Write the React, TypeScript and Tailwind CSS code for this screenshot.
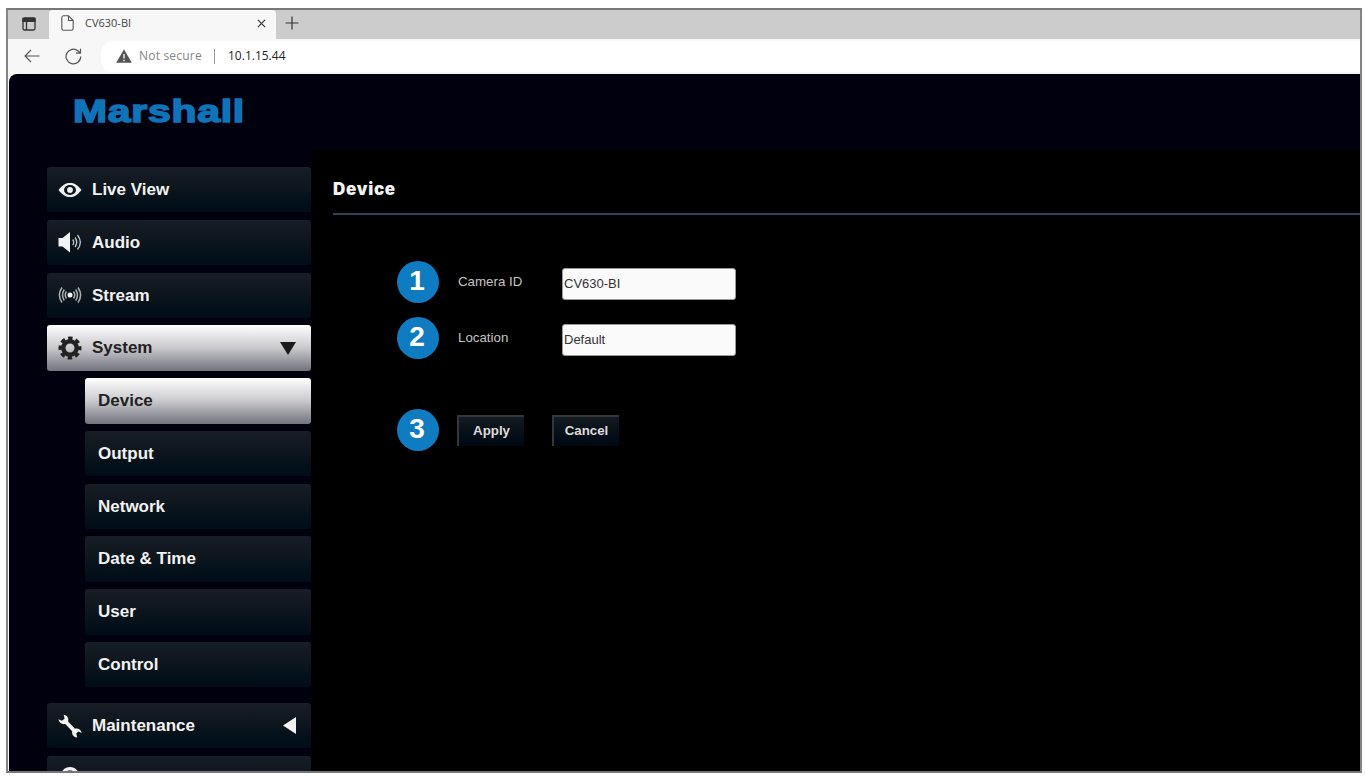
import { useState, type ReactNode } from 'react';
import clsx from 'clsx';

// ── icons ────────────────────────────────────────────────────────────
function EyeIcon() {
  return (
    <svg viewBox="0 0 24 24" className="h-6 w-6" fill="none" stroke="currentColor">
      <path d="M0.500 12C4.500 6.600 8 5 12 5S19.500 6.600 23.500 12C19.500 17.400 16 19 12 19S4.500 17.400 0.500 12Z" fill="currentColor" stroke="none" />
      <ellipse cx="12" cy="12" rx="6" ry="4.900" fill="#0c151d" stroke="none" />
      <circle cx="12" cy="12" r="2.900" fill="currentColor" stroke="none" />
    </svg>
  );
}

function SpeakerIcon() {
  return (
    <svg viewBox="0 0 24 24" className="h-6 w-6" fill="none" stroke="currentColor" strokeWidth="1.300">
      <path d="M0.500 8H4.500L12 2V22.500L4.500 16.500H0.500Z" fill="currentColor" stroke="none" />
      <path d="M14.700 9.500Q16.700 12.200 14.700 15M17 7.500Q20.400 12.200 17 17M19.500 5Q25.200 12.200 19.500 19.500" opacity="0.800" />
    </svg>
  );
}

function StreamIcon() {
  return (
    <svg viewBox="0 0 24 24" className="h-6 w-6" fill="none" stroke="currentColor" strokeWidth="1.500">
      <circle cx="12" cy="12" r="2.500" fill="currentColor" stroke="none" />
      <g opacity="0.700">
        <path d="M15.500 8.500Q18 12 15.500 15.500M17.700 6.500Q21.200 12 17.700 17.500M20 4.500Q25.200 12 20 19.500" />
        <path d="M8.500 8.500Q6 12 8.500 15.500M6.300 6.500Q2.800 12 6.300 17.500M4 4.500Q-1.200 12 4 19.500" />
      </g>
    </svg>
  );
}

function GearIcon() {
  return (
    <svg viewBox="0 0 24 24" className="h-6 w-6" fill="none" stroke="currentColor">
      <circle cx="12" cy="12" r="6.700" strokeWidth="4.400" />
      <circle cx="12" cy="12" r="9.700" strokeWidth="3.600" strokeDasharray="4.400 3.218" strokeDashoffset="2.200" />
    </svg>
  );
}

function WrenchIcon() {
  return (
    <svg viewBox="0 0 24 24" className="h-6 w-6" fill="currentColor">
      <path d="M5.600 0.800C9 1.100 11 4 10.100 7.400L17 14.700C20.500 13.900 23.300 16.200 23.700 19L20.400 17.600L18.200 19.600L19.300 23.400C15.800 23.300 13.500 20.500 14.200 17.200L7.200 10C4 10.700 1 8.900 0.400 5.300L3.900 6.700L6.600 4.700Z" />
    </svg>
  );
}

function InfoIcon() {
  return (
    <svg viewBox="0 0 24 24" className="h-6 w-6">
      <ellipse cx="12" cy="12" rx="10" ry="11" fill="currentColor" />
      <path d="M9.800 4.500H14.200V8H9.800Z" fill="#161c25" />
    </svg>
  );
}

// ── browser chrome ───────────────────────────────────────────────────
function TabStrip() {
  return (
    <div className="flex h-[28.500px] shrink-0 bg-[#cccccc] text-[#333]">
      <div className="flex w-[41px] items-center justify-center pb-px">
        <svg viewBox="0 0 14 14" className="h-3.5 w-3.5" fill="none" stroke="currentColor" strokeWidth="1.300">
          <rect x="1" y="1" width="12" height="12" rx="1.500" />
          <path d="M1 1.500H13V4.300H1Z" fill="currentColor" />
          <path d="M4.500 4V13" />
        </svg>
      </div>
      <div className="flex w-[227px] items-center rounded-t bg-[#f7f7f7] pr-[10px] pb-[2px] pl-3">
        <svg viewBox="0 0 13 16" className="h-4 w-[13px]" fill="none" stroke="#555" strokeWidth="1.100">
          <path d="M2.500 0.800H7.500L12.200 5.500V13.200Q12.200 15.200 10.500 15.200H2.500Q0.800 15.200 0.800 13.200V2.800Q0.800 0.800 2.500 0.800ZM7.500 0.800V5.500H12.200" />
        </svg>
        <span className="ml-[11px] flex-1 text-[11px] text-[#444]">CV630-BI</span>
        <svg viewBox="0 0 10 10" className="h-[9px] w-[9px]" fill="none" stroke="currentColor" strokeWidth="1.300">
          <path d="M1 1L9 9M9 1L1 9" />
        </svg>
      </div>
      <svg viewBox="0 0 14 14" className="mt-[6px] ml-[9px] h-3.5 w-3.5" fill="none" stroke="currentColor" strokeWidth="1.200">
        <path d="M7 0.500V13.500M0.500 7H13.500" />
      </svg>
    </div>
  );
}

function AddressBar() {
  return (
    <div className="flex h-[35.500px] shrink-0 items-center bg-[#f7f7f7] pl-[16px]">
      <svg viewBox="0 0 16 14" className="h-3.5 w-4" fill="none" stroke="#555" strokeWidth="1.100">
        <path d="M15.500 7H1M7 1L1 7L7 13" />
      </svg>
      <svg viewBox="0 0 17 17" className="ml-[25px] h-[17px] w-[17px]" fill="none" stroke="#555" strokeWidth="1.200">
        <path d="M15.700 8.500A7.300 7.300 0 1 1 13.200 3L15.500 5.200M15.500 0.800V5.200H11" />
      </svg>
      <div className="ml-[19px] flex h-[31px] flex-1 items-center rounded-l-xl bg-white pl-[15px]">
        <svg viewBox="0 0 16 14" className="h-3.5 w-4">
          <path d="M8 0.300L15.800 13.700H0.200Z" fill="#555" />
          <path d="M8 5V9.500M8 10.700V12.200" stroke="#fff" strokeWidth="1.300" />
        </svg>
        <span className="ml-[7px] w-[64px] text-[12px] tracking-[0.200px] whitespace-nowrap text-[#858585]">Not secure</span>
        <span className="ml-[11px] h-[15px] w-px bg-[#999]" />
        <span className="ml-[13px] text-[12px] text-[#222]">10.1.15.44</span>
      </div>
    </div>
  );
}

// ── sidebar ──────────────────────────────────────────────────────────
const systemItems = ['Device', 'Output', 'Network', 'Date & Time', 'User', 'Control'];

function NavItem({ label, icon, active, arrow, sub, onClick }: {
  label: string; icon?: ReactNode; active?: boolean; arrow?: 'down' | 'left'; sub?: boolean; onClick?: () => void;
}) {
  return (
    <button
      onClick={onClick}
      className={clsx(
        'flex h-[45.400px] shrink-0 items-center rounded-[3px] bg-linear-to-b text-left text-[17px] font-bold',
        sub ? 'ml-[37.500px] pl-[13.500px]' : 'pl-[11px]',
        active ? 'from-white via-[#c9c9cd] to-[#73737e] text-[#222]' : 'from-[#181d26] via-[#0c151d] to-[#000c17] text-[#f2f2f2]',
      )}
    >
      {icon}
      <span className={clsx('flex-1', !sub && 'ml-[10px]')}>{label}</span>
      {arrow === 'down' && (
        <svg viewBox="0 0 16 13" className="mr-[15px] h-[13px] w-4"><path d="M0 0H16L8 13Z" fill="#1b1b1b" /></svg>
      )}
      {arrow === 'left' && (
        <svg viewBox="0 0 13 17" className="mr-[15px] h-[17px] w-[13px]"><path d="M13 0V17L0 8.500Z" fill="#f2f2f2" /></svg>
      )}
    </button>
  );
}

function Sidebar({ page, onPage }: { page: string; onPage: (p: string) => void }) {
  return (
    <nav className="flex w-[302px] shrink-0 flex-col gap-[7.400px] bg-[#00000e] pt-[17px] pl-[38px]">
      <NavItem label="Live View" icon={<EyeIcon />} />
      <NavItem label="Audio" icon={<SpeakerIcon />} />
      <NavItem label="Stream" icon={<StreamIcon />} />
      <NavItem label="System" icon={<GearIcon />} arrow="down" active />
      {systemItems.map((item) => (
        <NavItem key={item} label={item} sub active={item === page} onClick={() => onPage(item)} />
      ))}
      <div className="mt-2 flex flex-col gap-[7.400px]">
        <NavItem label="Maintenance" icon={<WrenchIcon />} arrow="left" />
        <NavItem label="" icon={<InfoIcon />} />
      </div>
    </nav>
  );
}

// ── device form ──────────────────────────────────────────────────────
function Step({ n }: { n: number }) {
  return (
    <span className="flex h-[42px] w-[42px] shrink-0 items-center justify-center rounded-full bg-[#0f7bc1] pr-[2px] pb-[3px] text-[28px] leading-none font-bold text-white">
      {n}
    </span>
  );
}

function Field({ n, label, value, onChange }: { n: number; label: string; value: string; onChange: (v: string) => void }) {
  return (
    <label className="flex h-[42px] items-center">
      <Step n={n} />
      <span className="ml-[19px] w-[104px] pb-px text-[13.300px] text-[#c4c4c4]">{label}</span>
      <input
        value={value}
        onChange={(e) => onChange(e.target.value)}
        className="mt-[3px] h-8 w-[174px] rounded-[3px] border border-[#999] bg-[#fafafa] pl-px text-[13px] text-[#333] outline-none"
      />
    </label>
  );
}

function FormButton({ children }: { children: ReactNode }) {
  return (
    <button className="h-[31px] w-[67px] border-t-2 border-l-2 border-t-[#33363a] border-l-[#33363a] bg-linear-to-b from-[#141a20] to-[#000813] text-[13.300px] font-bold text-[#ddd]">
      {children}
    </button>
  );
}

function DevicePage() {
  const [cameraId, setCameraId] = useState('CV630-BI');
  const [location, setLocation] = useState('Default');

  return (
    <main className="flex-1 bg-black pl-[22px]">
      <h1 className="flex h-[65px] items-center border-b-2 border-[#343f5c] pt-[17px] font-[Inter,sans-serif] text-[17px] font-black tracking-[0.700px] text-[#f2f2f2]">
        Device
      </h1>
      <div className="flex flex-col pt-[46px] pl-[64px]">
        <Field n={1} label="Camera ID" value={cameraId} onChange={setCameraId} />
        <div className="h-[14px]" />
        <Field n={2} label="Location" value={location} onChange={setLocation} />
        <div className="mt-[50px] flex items-center">
          <Step n={3} />
          <div className="ml-[18px] flex gap-[28px]">
            <FormButton>Apply</FormButton>
            <FormButton>Cancel</FormButton>
          </div>
        </div>
      </div>
    </main>
  );
}

export default function App() {
  const [page, setPage] = useState('Device');

  return (
    <div className="h-[776px] w-[1365px] overflow-hidden bg-white pt-2 pl-1.5">
      <div className="flex h-[765px] w-[1356px] flex-col overflow-hidden border-2 border-t-[#777] border-r-[#858585] border-b-[#777] border-l-[#858585] bg-[#f7f7f7] font-['Open_Sans','Noto_Sans',sans-serif]">
        <TabStrip />
        <AddressBar />
        <div className="ml-px flex min-h-0 flex-1 flex-col overflow-hidden rounded-tl-lg bg-[#00000f] font-['Liberation_Sans',Arial,sans-serif]">
          <header className="h-[76px] shrink-0 pt-[15px] pl-[60px]">
            <svg viewBox="0 0 180 44" className="h-11 w-[180px]">
              <text x="4" y="32.500" fontSize="30.500" fontWeight="700" fill="#0f73b8" stroke="#0f73b8" strokeWidth="1.500" letterSpacing="0.600" textLength="172" lengthAdjust="spacingAndGlyphs">
                Marshall
              </text>
            </svg>
          </header>
          <div className="flex min-h-0 flex-1 overflow-hidden">
            <Sidebar page={page} onPage={setPage} />
            <DevicePage />
          </div>
        </div>
      </div>
    </div>
  );
}
